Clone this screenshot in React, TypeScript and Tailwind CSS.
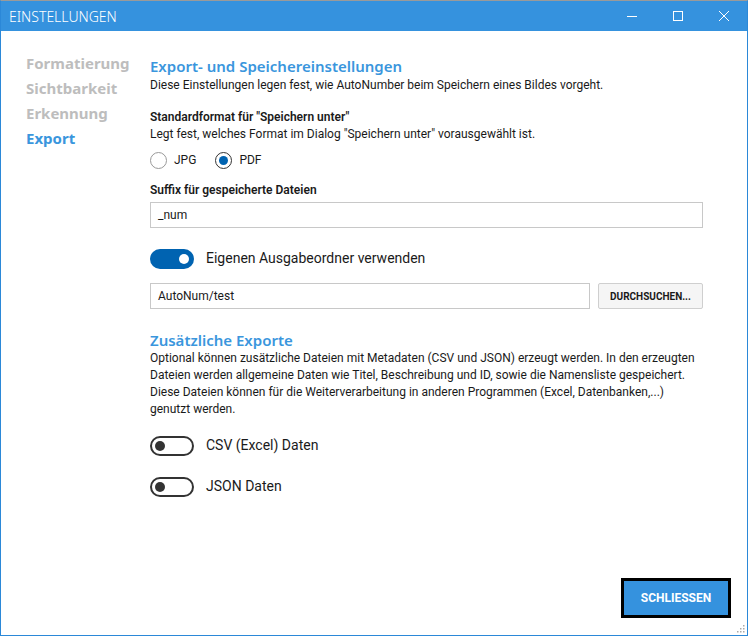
import React from "react";

function Radio({ label, checked }: { label: string; checked?: boolean }) {
  return (
    <div className="flex items-center gap-[7px] mr-[19px]">
      <span
        className={
          "w-[17px] h-[17px] rounded-full border flex items-center justify-center " +
          (checked ? "border-[#333]" : "border-[#999]")
        }
      >
        {checked && <span className="w-[9px] h-[9px] rounded-full bg-[#0063b1]" />}
      </span>
      <span>{label}</span>
    </div>
  );
}

function Toggle({ on, label }: { on?: boolean; label: string }) {
  return (
    <div className="flex items-center gap-3">
      {on ? (
        <span className="w-[44px] h-[20px] rounded-full bg-[#0063b1] flex items-center justify-end pr-[5px]">
          <span className="w-[10px] h-[10px] rounded-full bg-white" />
        </span>
      ) : (
        <span className="w-[44px] h-[20px] rounded-full border-2 border-[#333] flex items-center pl-[3px]">
          <span className="w-[10px] h-[10px] rounded-full bg-[#333]" />
        </span>
      )}
      <span className="text-[14px] text-[#1a1a1a]">{label}</span>
    </div>
  );
}

export default function App() {
  const nav = [
    { label: "Formatierung", active: false },
    { label: "Sichtbarkeit", active: false },
    { label: "Erkennung", active: false },
    { label: "Export", active: true },
  ];

  const heading = { fontFamily: '"Noto Sans", sans-serif' };

  return (
    <div
      className="w-[748px] h-[636px] flex flex-col bg-white border border-[#2b88d8] border-t-[#9a9a9a] text-[12px] text-[#1a1a1a] relative"
      style={{ fontFamily: 'Roboto, "Noto Sans", sans-serif' }}
    >
      <div className="h-[30px] bg-[#3592de] flex items-center justify-between pl-[8px] shrink-0">
        <span className="text-white text-[14px] font-light" style={heading}>EINSTELLUNGEN</span>
        <div className="flex h-full text-white">
          <div className="w-[46px] flex items-center justify-center">
            <svg width="10" height="10" viewBox="0 0 10 10"><path d="M0 5.5h10" stroke="white" strokeWidth="1" /></svg>
          </div>
          <div className="w-[46px] flex items-center justify-center">
            <svg width="10" height="10" viewBox="0 0 10 10"><rect x="0.5" y="0.5" width="9" height="9" fill="none" stroke="white" strokeWidth="1" /></svg>
          </div>
          <div className="w-[46px] flex items-center justify-center">
            <svg width="10" height="10" viewBox="0 0 10 10"><path d="M0 0L10 10M10 0L0 10" stroke="white" strokeWidth="1" /></svg>
          </div>
        </div>
      </div>

      <div className="flex flex-1">
        <nav className="w-[149px] pl-[25px] pt-[20px] flex flex-col" style={heading}>
          {nav.map((item) => (
            <span
              key={item.label}
              className={
                "text-[15px] font-bold leading-[25px] " +
                (item.active ? "text-[#3a96dd]" : "text-[#bdbdbd]")
              }
            >
              {item.label}
            </span>
          ))}
        </nav>

        <div className="flex-1 pr-[44px] pt-[25px]">
          <h2 className="text-[15px] font-semibold text-[#3a96dd] leading-[21px]" style={heading}>
            Export- und Speichereinstellungen
          </h2>
          <p className="leading-[17px]">
            Diese Einstellungen legen fest, wie AutoNumber beim Speichern eines Bildes vorgeht.
          </p>

          <p className="font-semibold mt-[15px] leading-[17px]">Standardformat für "Speichern unter"</p>
          <p className="leading-[17px]">Legt fest, welches Format im Dialog "Speichern unter" vorausgewählt ist.</p>

          <div className="flex mt-[8px] h-[18px]">
            <Radio label="JPG" />
            <Radio label="PDF" checked />
          </div>

          <p className="font-semibold mt-[13px] leading-[17px]">Suffix für gespeicherte Dateien</p>
          <div className="mt-[3px] h-[26px] border border-[#c8c8c8] flex items-center px-[7px]">_num</div>

          <div className="mt-[20px]">
            <Toggle on label="Eigenen Ausgabeordner verwenden" />
          </div>

          <div className="flex mt-[14px] gap-[8px]">
            <div className="flex-1 h-[26px] border border-[#c8c8c8] flex items-center px-[7px]">AutoNum/test</div>
            <button className="w-[105px] h-[26px] border border-[#cfcfcf] rounded-[2px] bg-[#f5f5f5] text-[10px] font-bold">
              DURCHSUCHEN...
            </button>
          </div>

          <h2 className="text-[15px] font-semibold text-[#3a96dd] leading-[18px] mt-[22px]" style={heading}>
            Zusätzliche Exporte
          </h2>
          <p className="leading-[17px] whitespace-nowrap mt-[1px]">
            Optional können zusätzliche Dateien mit Metadaten (CSV und JSON) erzeugt werden. In den erzeugten
            <br />
            Dateien werden allgemeine Daten wie Titel, Beschreibung und ID, sowie die Namensliste gespeichert.
            <br />
            Diese Dateien können für die Weiterverarbeitung in anderen Programmen (Excel, Datenbanken,...)
            <br />
            genutzt werden.
          </p>

          <div className="mt-[17px] flex flex-col gap-[20px]">
            <Toggle label="CSV (Excel) Daten" />
            <Toggle label="JSON Daten" />
          </div>
        </div>
      </div>

      <div className="flex justify-end pr-[16px] pb-[17px]">
        <button className="w-[110px] h-[40px] bg-[#3592de] border-[3px] border-black text-white text-[12px] font-bold">
          SCHLIESSEN
        </button>
      </div>

      <svg className="absolute right-[2px] bottom-[2px]" width="10" height="10" viewBox="0 0 10 10">
        {[[8, 2], [8, 5], [5, 5], [8, 8], [5, 8], [2, 8]].map(([x, y], i) => (
          <rect key={i} x={x} y={y} width="1.5" height="1.5" fill="#aaa" />
        ))}
      </svg>
    </div>
  );
}
